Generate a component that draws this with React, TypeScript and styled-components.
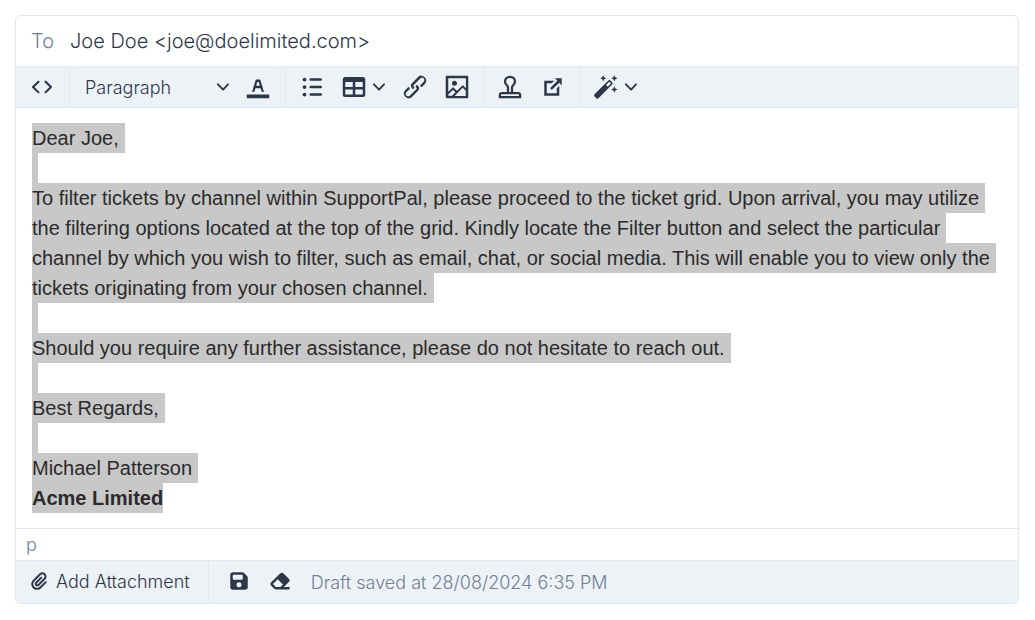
import React from "react";
import styled, { createGlobalStyle } from "styled-components";
import { FaEraser, FaFloppyDisk, FaPaperclip } from "react-icons/fa6";

const colors = {
  ink: "#2d3748",
  body: "#2b2b2b",
  muted: "#718096",
  border: "#e2e8f0",
  bar: "#edf2f7",
  selection: "#c8c8c8",
};

const GlobalStyle = createGlobalStyle`
  *, *::before, *::after { box-sizing: border-box; }
  body {
    margin: 0;
    background: #fff;
    color: ${colors.ink};
    font-family: Inter, "Liberation Sans", sans-serif;
    font-weight: 300;
  }
`;

const Page = styled.main`
  padding: 15px 16px 16px 15px;
`;

const Composer = styled.form`
  border: 1px solid ${colors.border};
  border-radius: 5px;
  overflow: hidden;
`;

const Recipient = styled.div`
  display: flex;
  align-items: center;
  gap: 16px;
  height: 50px;
  padding: 0 15px;
  font-size: 20px;
`;

const RecipientLabel = styled.label`
  color: ${colors.muted};
`;

const RecipientInput = styled.input`
  flex: 1;
  min-width: 0;
  padding: 0;
  border: 0;
  outline: 0;
  background: transparent;
  color: inherit;
  font: inherit;
`;

const Toolbar = styled.div`
  display: flex;
  height: 42px;
  background: ${colors.bar};
  border-top: 1px solid ${colors.border};
  border-bottom: 1px solid ${colors.border};
`;

const Group = styled.div<{ $gap?: number; $start?: number; $end?: number }>`
  display: flex;
  align-items: center;
  gap: ${(p) => p.$gap ?? 0}px;
  padding-left: ${(p) => p.$start ?? 11}px;
  padding-right: ${(p) => p.$end ?? 11}px;
  & + & { border-left: 1px solid ${colors.border}; }
`;

const IconButton = styled.button`
  display: flex;
  align-items: center;
  padding: 0;
  border: 0;
  background: transparent;
  color: inherit;
  cursor: pointer;
  svg { display: block; flex: none; fill: currentColor; }
`;

const MenuButton = styled(IconButton)`
  gap: 4px;
  padding-right: 3px;
`;

const FormatPicker = styled.div`
  display: grid;
  align-items: center;
  width: 144px;
  svg { grid-area: 1 / 1; justify-self: end; fill: currentColor; pointer-events: none; }
`;

const FormatSelect = styled.select`
  grid-area: 1 / 1;
  appearance: none;
  padding: 2px 0 0;
  border: 0;
  background: transparent;
  color: inherit;
  font: inherit;
  font-size: 18px;
  line-height: 24px;
`;

const Body = styled.div`
  padding: 15px 16px;
  color: ${colors.body};
  font-family: "Liberation Sans", Arial, sans-serif;
  font-size: 20px;
  font-weight: 400;
  line-height: 30px;
  outline: 0;
`;

const Paragraph = styled.p`
  margin: 0;
`;

const Selected = styled.span<{ $tail?: boolean }>`
  padding: 4px ${(p) => (p.$tail ? 6 : 0)}px 4px 0;
  background: ${colors.selection};
  -webkit-box-decoration-break: clone;
  box-decoration-break: clone;
`;

const PathBar = styled.div`
  height: 32px;
  padding: 0 10px;
  border-top: 1px solid ${colors.border};
  color: ${colors.muted};
  font-size: 18px;
  line-height: 32px;
`;

const Footer = styled.div`
  display: flex;
  height: 43px;
  background: ${colors.bar};
  border-top: 1px solid ${colors.border};
  font-size: 18px;
`;

const FooterButton = styled(IconButton)`
  gap: 8px;
  padding-bottom: 2px;
  font: inherit;
`;

const Status = styled.span`
  color: ${colors.muted};
`;

const Icon = ({ children }: { children: React.ReactNode }) => (
  <svg width="30" height="30" viewBox="0 0 24 24" aria-hidden="true">{children}</svg>
);

const Chevron = () => (
  <svg width="12" height="12" viewBox="0 0 10 10" aria-hidden="true">
    <path d="M8.7 2.2c.3-.3.8-.3 1 0 .4.4.4.9 0 1.2L5.7 7.8c-.3.3-.9.3-1.2 0L.2 3.4a.8.8 0 0 1 0-1.2c.3-.3.8-.3 1.1 0L5 6l3.7-3.8Z" />
  </svg>
);

const paragraphs = [
  "Dear Joe,",
  "",
  "To filter tickets by channel within SupportPal, please proceed to the ticket grid. Upon arrival, you may utilize the filtering options located at the top of the grid. Kindly locate the Filter button and select the particular channel by which you wish to filter, such as email, chat, or social media. This will enable you to view only the tickets originating from your chosen channel.",
  "",
  "Should you require any further assistance, please do not hesitate to reach out.",
  "",
  "Best Regards,",
  "",
  "Michael Patterson",
];

export default function App() {
  return (
    <>
      <GlobalStyle />
      <Page>
        <Composer onSubmit={(e) => e.preventDefault()}>
          <Recipient>
            <RecipientLabel htmlFor="to">To</RecipientLabel>
            <RecipientInput id="to" type="text" defaultValue="Joe Doe <joe@doelimited.com>" />
          </Recipient>

          <Toolbar role="toolbar" aria-label="Formatting">
            <Group $end={12}>
              <IconButton type="button" aria-label="Source code">
                <Icon>
                  <path d="M9.8 15.7c.3.3.3.8 0 1-.3.4-.9.4-1.2 0l-4.4-4.1a.8.8 0 0 1 0-1.2l4.4-4.2c.3-.3.9-.3 1.2 0 .3.3.3.8 0 1.1L6 12l3.8 3.7ZM14.2 15.7c-.3.3-.3.8 0 1 .4.4.9.4 1.2 0l4.4-4.1c.3-.3.3-.8 0-1.2l-4.4-4.2a.8.8 0 0 0-1.2 0c-.3.3-.3.8 0 1.1L18 12l-3.8 3.7Z" />
                </Icon>
              </IconButton>
            </Group>
            <Group $gap={14} $start={15} $end={12}>
              <FormatPicker>
                <FormatSelect aria-label="Block format" defaultValue="p">
                  <option value="p">Paragraph</option>
                  <option value="h1">Heading 1</option>
                </FormatSelect>
                <Chevron />
              </FormatPicker>
              <IconButton type="button" aria-label="Text color">
                <Icon>
                  <path d="M3 18h18v3H3z" />
                  <path d="M8.7 16h-.8a.5.5 0 0 1-.5-.6l2.7-9c.1-.3.3-.4.5-.4h2.8c.2 0 .4.1.5.4l2.7 9a.5.5 0 0 1-.5.6h-.8a.5.5 0 0 1-.4-.4l-.7-2.2c0-.3-.3-.4-.5-.4h-3.4c-.2 0-.4.1-.5.4l-.7 2.2c0 .3-.2.4-.4.4Zm2.6-7.6-.6 2a.5.5 0 0 0 .5.6h1.6a.5.5 0 0 0 .5-.6l-.6-2c0-.3-.3-.4-.5-.4h-.4c-.2 0-.4.1-.5.4Z" />
                </Icon>
              </IconButton>
            </Group>
            <Group $gap={12}>
              <IconButton type="button" aria-label="Bullet list">
                <Icon>
                  <path d="M11 5h8a1 1 0 0 1 0 2h-8a1 1 0 0 1 0-2Zm0 6h8a1 1 0 0 1 0 2h-8a1 1 0 0 1 0-2Zm0 6h8a1 1 0 0 1 0 2h-8a1 1 0 0 1 0-2Z" />
                  <circle cx="6" cy="6" r="1.5" />
                  <circle cx="6" cy="12" r="1.5" />
                  <circle cx="6" cy="18" r="1.5" />
                </Icon>
              </IconButton>
              <MenuButton type="button" aria-label="Table">
                <Icon>
                  <path d="M19 4a2 2 0 0 1 2 2v12a2 2 0 0 1-2 2H5a2 2 0 0 1-2-2V6c0-1.1.9-2 2-2h14ZM5 14v4h6v-4H5Zm14 0h-6v4h6v-4Zm0-6h-6v4h6V8ZM5 12h6V8H5v4Z" />
                </Icon>
                <Chevron />
              </MenuButton>
              <IconButton type="button" aria-label="Insert link">
                <Icon>
                  <path d="M6.2 12.3a1 1 0 0 1 1.4 1.4l-2 2a2 2 0 1 0 2.6 2.8l4.8-4.8a1 1 0 0 0 0-1.4 1 1 0 1 1 1.4-1.3 2.9 2.9 0 0 1 0 4L9.6 20a3.9 3.9 0 0 1-5.5-5.5l2-2Zm11.6-.6a1 1 0 0 1-1.4-1.4l2-2a2 2 0 1 0-2.6-2.8L11 10.3a1 1 0 0 0 0 1.4A1 1 0 1 1 9.6 13a2.9 2.9 0 0 1 0-4L14.4 4a3.9 3.9 0 0 1 5.5 5.5l-2 2Z" />
                </Icon>
              </IconButton>
              <IconButton type="button" aria-label="Insert image">
                <Icon>
                  <path
                    d="m5 15.7 3.3-3.2c.3-.3.7-.3 1 0L12 15l4.1-4c.3-.4.8-.4 1 0l2 1.9V5H5v10.7ZM5 18V19h3l2.8-2.9-2-2L5 17.9Zm14-3-2.5-2.4-6.4 6.5H19v-4ZM4 3h16c.6 0 1 .4 1 1v16c0 .6-.4 1-1 1H4a1 1 0 0 1-1-1V4c0-.6.4-1 1-1Zm6 8a2 2 0 1 0 0-4 2 2 0 0 0 0 4Z"
                    fillRule="evenodd"
                  />
                </Icon>
              </IconButton>
            </Group>
            <Group $gap={13}>
              <IconButton type="button" aria-label="Insert canned response">
                <Icon>
                  <path
                    d="M10.4 16.800V12.300C10.400 10.600 8 9.900 8 7.700a4 3.900 0 0 1 8 0C16 9.900 13.600 10.600 13.600 12.300V16.800M3.900 20v-1.700a1.500 1.500 0 0 1 1.500-1.500h13.200a1.500 1.500 0 0 1 1.500 1.500V20Z"
                    fill="none"
                    stroke="currentColor"
                    strokeWidth="1.8"
                  />
                </Icon>
              </IconButton>
              <IconButton type="button" aria-label="Insert article link">
                <Icon>
                  <path d="m15 13 2-2v8H5V7h8l-2 2H7v8h8v-4Zm4-8v5.5l-2-2-5.6 5.5H10v-1.4L15.5 7l-2-2H19Z" />
                </Icon>
              </IconButton>
            </Group>
            <Group>
              <MenuButton type="button" aria-label="Writing assistant">
                <Icon>
                  <g transform="translate(10.2 13.6) rotate(-45)">
                    <path
                      d="M-8.200-2.200H7.300a1.200 1.200 0 0 1 1.200 1.200V1a1.200 1.200 0 0 1-1.200 1.200H-8.200a1.200 1.200 0 0 1-1.200-1.200V-1a1.200 1.200 0 0 1 1.200-1.200ZM3.600-1V1H7.200V-1Z"
                      fillRule="evenodd"
                    />
                  </g>
                  <path d="m9.800 2.500.8 1.700 1.700.8-1.700.8-.8 1.700-.8-1.700-1.700-.8 1.700-.8ZM18.700 2.500l.8 1.700 1.700.8-1.700.8-.8 1.700-.8-1.700-1.700-.8 1.700-.8ZM18.700 11.500l.8 1.700 1.700.8-1.700.8-.8 1.700-.8-1.700-1.700-.8 1.700-.8Z" />
                </Icon>
                <Chevron />
              </MenuButton>
            </Group>
          </Toolbar>

          <Body
            contentEditable
            suppressContentEditableWarning
            role="textbox"
            aria-label="Message"
            aria-multiline="true"
            spellCheck={false}
          >
            {paragraphs.map((text, i) => (
              <Paragraph key={i}>
                <Selected $tail={text !== ""}>{text || "\u00a0"}</Selected>
              </Paragraph>
            ))}
            <Paragraph>
              <Selected as="strong">Acme Limited</Selected>
            </Paragraph>
          </Body>

          <PathBar>p</PathBar>

          <Footer>
            <Group $start={14} $end={18}>
              <FooterButton type="button">
                <FaPaperclip size={18} />
                Add Attachment
              </FooterButton>
            </Group>
            <Group $gap={20} $start={20}>
              <FooterButton type="button" aria-label="Save draft">
                <FaFloppyDisk size={20} />
              </FooterButton>
              <FooterButton type="button" aria-label="Discard draft">
                <FaEraser size={22} />
              </FooterButton>
              <Status role="status">Draft saved at 28/08/2024 6:35 PM</Status>
            </Group>
          </Footer>
        </Composer>
      </Page>
    </>
  );
}
